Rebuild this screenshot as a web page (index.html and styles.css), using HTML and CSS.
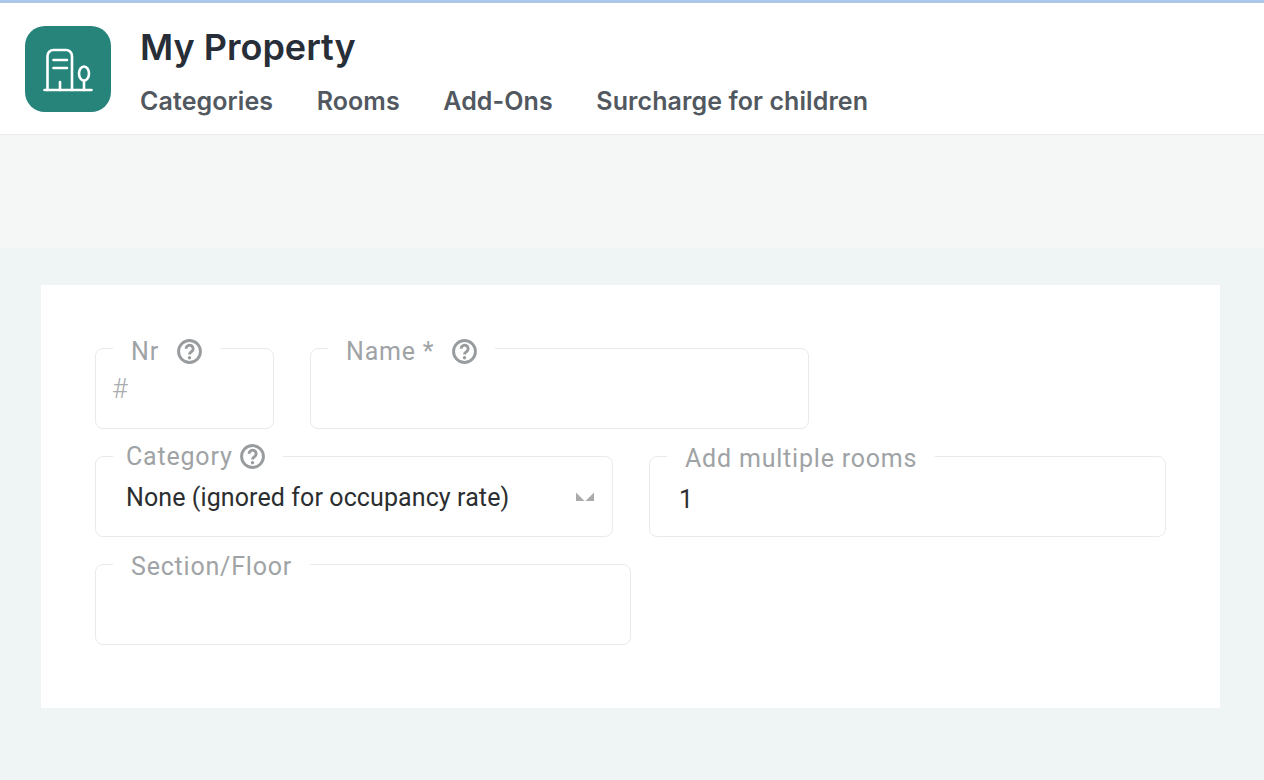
FILE: index.html
```html
<!DOCTYPE html>
<html lang="en">
<head>
<meta charset="utf-8">
<title>My Property</title>
<link rel="stylesheet" href="styles.css">
</head>
<body>
<header class="header">
  <div class="logo">
    <svg width="52" height="52" viewBox="0 0 52 52" fill="none" stroke="#fff" stroke-width="2.600" stroke-linecap="round" stroke-linejoin="round">
      <path d="M2.500 47H49.500"/>
      <path d="M5.500 47V13a6 6 0 0 1 6-6h12.500a6 6 0 0 1 6 6v34"/>
      <path d="M11.500 17h13.500M11.500 25h13.500"/>
      <path d="M18 47v-8"/>
      <ellipse cx="42" cy="30.500" rx="5" ry="7"/>
      <path d="M42 38v9"/>
    </svg>
  </div>
  <div class="titles">
    <h1 class="title">My Property</h1>
    <nav class="tabs">
      <a class="tab">Categories</a>
      <a class="tab">Rooms</a>
      <a class="tab">Add-Ons</a>
      <a class="tab">Surcharge for children</a>
    </nav>
  </div>
</header>
<div class="band"></div>
<main class="main">
  <form class="card">
    <div class="row">
      <fieldset class="field field-nr">
        <legend class="legend legend-top"><span>Nr</span><svg class="help" viewBox="0 0 24 24"><circle cx="12" cy="12" r="10.500" class="help-ring"/><path d="M8.700 9.300a3.400 3.400 0 1 1 5.200 2.900c-1.200.8-1.900 1.300-1.900 2.600" class="help-ring"/><circle cx="12" cy="18" r="1.600" class="help-dot"/></svg></legend>
        <input class="input input-nr" placeholder="#">
      </fieldset>
      <fieldset class="field field-name">
        <legend class="legend legend-top"><span>Name *</span><svg class="help" viewBox="0 0 24 24"><circle cx="12" cy="12" r="10.500" class="help-ring"/><path d="M8.700 9.300a3.400 3.400 0 1 1 5.200 2.900c-1.200.8-1.900 1.300-1.900 2.600" class="help-ring"/><circle cx="12" cy="18" r="1.600" class="help-dot"/></svg></legend>
        <input class="input">
      </fieldset>
    </div>
    <div class="row">
      <fieldset class="field field-cat">
        <legend class="legend legend-cat"><span>Category</span><svg class="help" viewBox="0 0 24 24"><circle cx="12" cy="12" r="10.500" class="help-ring"/><path d="M8.700 9.300a3.400 3.400 0 1 1 5.200 2.900c-1.200.8-1.900 1.300-1.900 2.600" class="help-ring"/><circle cx="12" cy="18" r="1.600" class="help-dot"/></svg></legend>
        <select class="input select"><option>None (ignored for occupancy rate)</option></select>
        <svg class="arrow" width="20" height="10" viewBox="0 0 20 10"><path d="M1 .5v8.500h8.500zM19 .5v8.500h-8.500z" fill="#aaa"/></svg>
      </fieldset>
      <fieldset class="field field-add">
        <legend class="legend legend-low"><span>Add multiple rooms</span></legend>
        <input class="input input-add" value="1">
      </fieldset>
    </div>
    <div class="row">
      <fieldset class="field field-section">
        <legend class="legend legend-low"><span>Section/Floor</span></legend>
        <input class="input">
      </fieldset>
    </div>
  </form>
</main>
</body>
</html>
```
FILE: styles.css
```css
* { box-sizing: border-box; }
html, body { margin: 0; height: 100%; }
body {
  background: #eff5f4;
  font-family: Roboto, "Liberation Sans", sans-serif;
  overflow: hidden;
}
.header {
  display: flex;
  gap: 29px;
  height: 135px;
  padding: 23px 0 0 25px;
  background: #fff;
  border-top: 3px solid #abc8ea;
  border-bottom: 1px solid #e9ecec;
}
.logo {
  display: flex;
  align-items: center;
  justify-content: center;
  width: 86px;
  height: 86px;
  border-radius: 20px;
  background: #26847b;
}
.titles { display: flex; flex-direction: column; }
.title {
  margin: -1px 0 0;
  height: 44px;
  font: 600 36px/44px Inter, sans-serif;
  color: #272e38;
}
.tabs { display: flex; gap: 43.500px; margin-top: 14px; }
.tab {
  font: 600 25px/36px Inter, sans-serif;
  letter-spacing: .09px;
  color: #51585f;
}
.band { height: 113px; background: #f5f7f6; }
.main { padding: 37px 44px 0 41px; }
.card {
  display: flex;
  flex-direction: column;
  gap: 13px;
  height: 423px;
  padding: 49px 54px 0;
  background: #fff;
}
.row { display: flex; gap: 36px; }
.field {
  position: relative;
  height: 95px;
  min-width: 0;
  margin: 0;
  padding: 0 16px;
  border: 1px solid #e8ebeb;
  border-radius: 8px;
}
.field-nr { width: 179px; }
.field-name { width: 499px; }
.field-cat { width: 518px; }
.field-add { width: 517px; }
.field-section { width: 536px; }
.legend {
  display: flex;
  align-items: center;
  gap: 18px;
  height: 28px;
  margin-left: 1px;
  padding: 0 18px;
  font-size: 25px;
  letter-spacing: .8px;
  color: #a0a3a5;
}
.legend-top { padding-top: 6px; }
.legend-low { padding-top: 4px; }
.legend-cat { gap: 7px; padding: 0 18px 0 13px; }
.help { width: 25px; height: 25px; }
.help-ring { fill: none; stroke: #999c9e; stroke-width: 2.800; }
.help-dot { fill: #999c9e; }
.input {
  display: block;
  width: 100%;
  height: 40px;
  padding: 0;
  border: 0;
  outline: 0;
  background: transparent;
  font: 25px/40px Roboto, sans-serif;
  letter-spacing: .1px;
  color: #2b2e30;
}
.input::placeholder { color: #a9acae; font-weight: 300; }
.input-nr { margin-top: 7px; font-size: 27px; }
.select {
  appearance: none;
  -webkit-appearance: none;
  margin: 8px 0 0;
  padding-left: 14px;
}
.input-add { margin-top: 10px; padding-left: 13px; }
.arrow { position: absolute; right: 17px; top: 22px; }
```
